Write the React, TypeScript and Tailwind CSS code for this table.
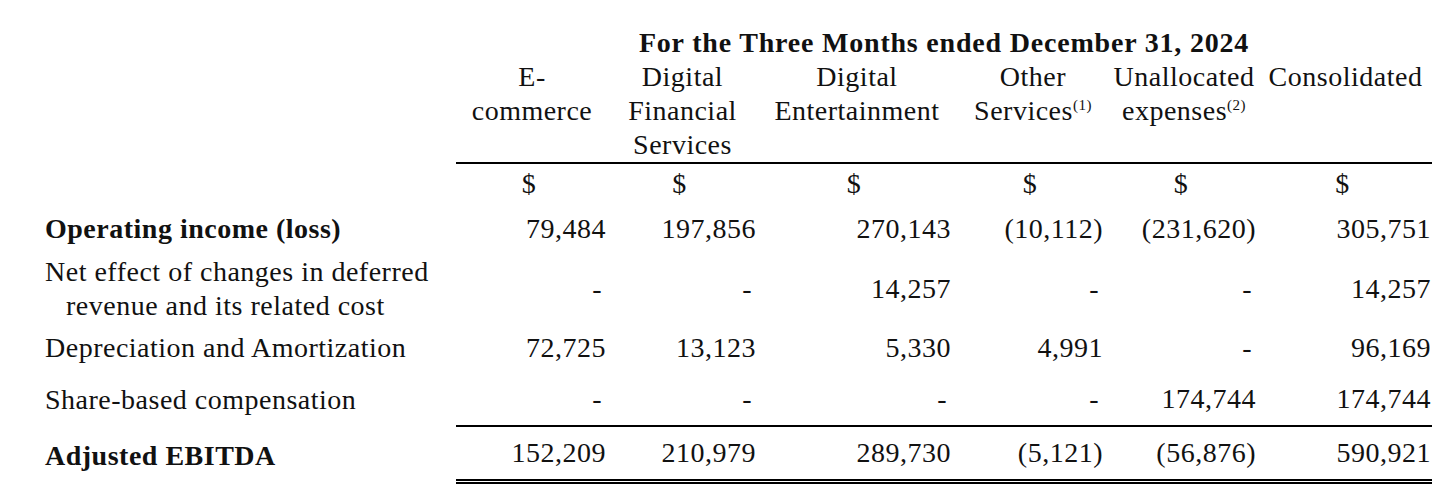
const grid = "grid grid-cols-[456px_152px_149px_200px_152px_150px_173px]";

// right padding of the figures in each column
const pads = ["pr-[2px]", "pr-[1px]", "pr-[6px]", "pr-[6px]", "pr-[3px]", "pr-[1px]"];

const headers: React.ReactNode[][] = [
  ["E-", "commerce"],
  ["Digital", "Financial", "Services"],
  ["Digital", "Entertainment"],
  [
    "Other",
    <>
      Services<sup className="text-[15px] -top-[10px]">(1)</sup>
    </>,
  ],
  [
    "Unallocated",
    <>
      expenses<sup className="text-[15px] -top-[10px]">(2)</sup>
    </>,
  ],
  ["Consolidated"],
];

type Row = {
  label: React.ReactNode;
  values: string[];
  height: string;
  bold?: boolean;
  rule?: string;
};

const rows: Row[] = [
  {
    label: "Operating income (loss)",
    values: ["79,484", "197,856", "270,143", "(10,112)", "(231,620)", "305,751"],
    height: "h-[52px]",
    bold: true,
  },
  {
    label: (
      <>
        <div>Net effect of changes in deferred</div>
        <div className="pl-[21px]">revenue and its related cost</div>
      </>
    ),
    values: ["-", "-", "14,257", "-", "-", "14,257"],
    height: "h-[68px]",
  },
  {
    label: "Depreciation and Amortization",
    values: ["72,725", "13,123", "5,330", "4,991", "-", "96,169"],
    height: "h-[50px]",
  },
  {
    label: "Share-based compensation",
    values: ["-", "-", "-", "-", "174,744", "174,744"],
    height: "h-[54px]",
    rule: "border-b-2 border-black",
  },
  {
    label: "Adjusted EBITDA",
    values: ["152,209", "210,979", "289,730", "(5,121)", "(56,876)", "590,921"],
    height: "h-[57px]",
    bold: true,
    rule: "border-b-[5px] border-double border-black",
  },
];

export default function App() {
  return (
    <div className="w-[1456px] h-[496px] bg-white text-[#111] font-['Liberation_Serif',serif] text-[28px] tracking-[0.5px] pt-[26px]">
      {/* Title */}
      <div className={grid}>
        <div />
        <div className="col-span-6 text-center font-bold leading-[34px] tracking-[0.8px]">
          For the Three Months ended December 31, 2024
        </div>
      </div>

      {/* Column headings */}
      <div className={grid}>
        <div />
        {headers.map((lines, i) => (
          <div key={i} className="h-[104px] border-b-2 border-black text-center leading-[34px]">
            {lines.map((l, j) => (
              <div key={j}>{l}</div>
            ))}
          </div>
        ))}
      </div>

      {/* Currency row */}
      <div className={grid}>
        <div />
        {headers.map((_, i) => (
          <div key={i} className="h-[39px] flex items-center justify-center pr-[6px]">
            $
          </div>
        ))}
      </div>

      {rows.map((r, i) => (
        <div key={i} className={grid}>
          <div className={`${r.height} pl-[45px] flex flex-col justify-center leading-[34px] ${r.bold ? "font-bold" : ""}`}>
            {r.label}
          </div>
          {r.values.map((v, j) => (
            <div
              key={j}
              className={`${r.height} flex items-center justify-end ${pads[j]} ${r.rule ?? ""}`}
            >
              <span className={v === "-" ? "pr-[4px]" : ""}>{v}</span>
            </div>
          ))}
        </div>
      ))}
    </div>
  );
}
